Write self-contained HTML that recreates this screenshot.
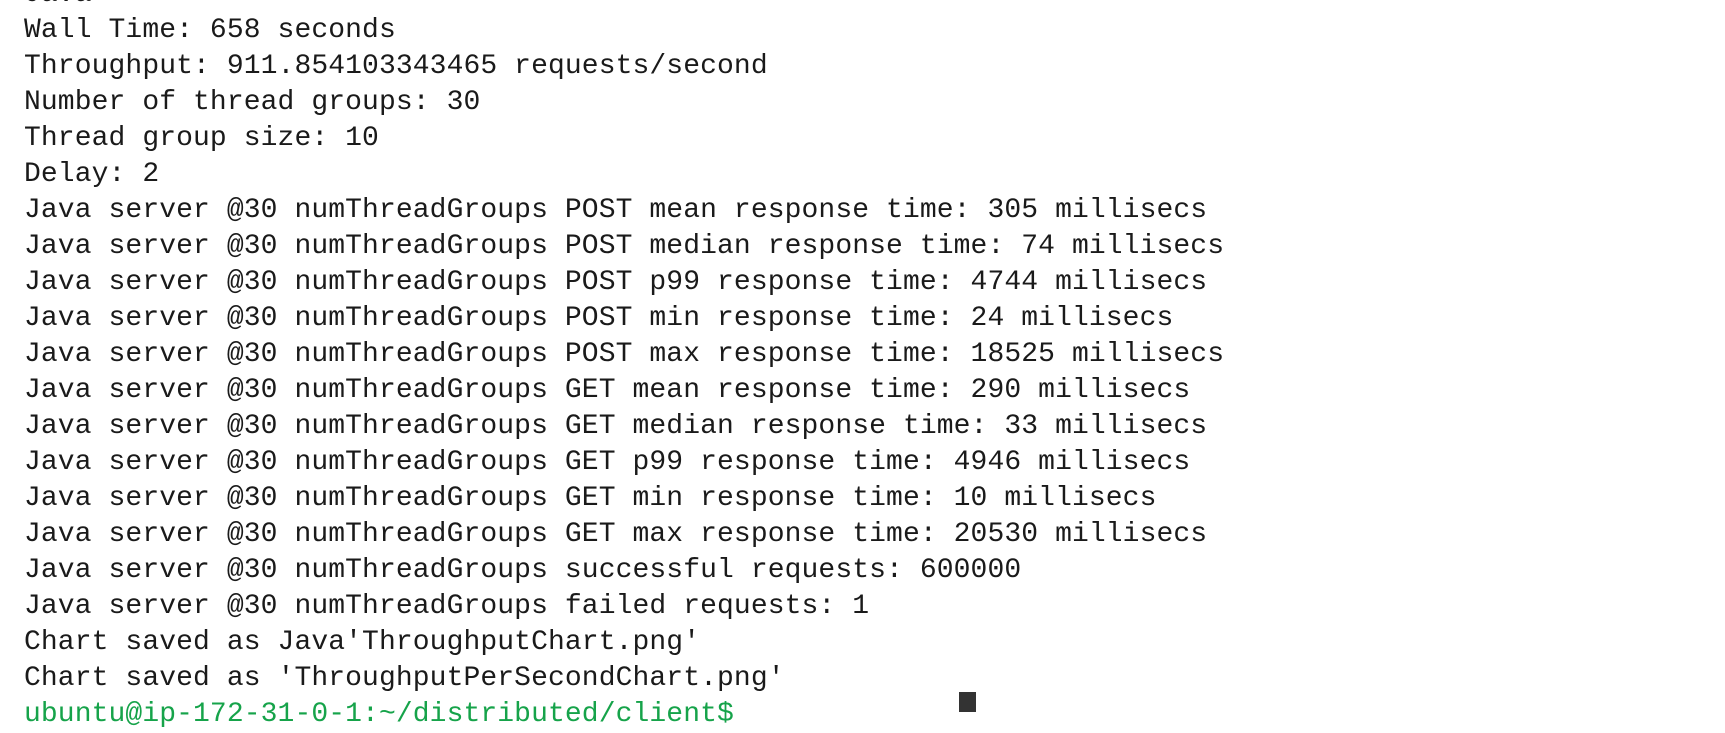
<!DOCTYPE html>
<html><head><style>
html,body{margin:0;padding:0;background:#fff;width:1725px;height:701px;overflow:hidden}
pre{position:absolute;left:24px;top:-23px;margin:0;font-family:"Liberation Mono",monospace;font-size:28px;line-height:36px;color:#1a1a1a;letter-spacing:0.1px}
.g{color:#16a34a}
.cur{position:absolute;left:959px;top:692px;width:17px;height:20px;background:#333}
</style></head><body>
<pre>Java
Wall Time: 658 seconds
Throughput: 911.854103343465 requests/second
Number of thread groups: 30
Thread group size: 10
Delay: 2
Java server @30 numThreadGroups POST mean response time: 305 millisecs
Java server @30 numThreadGroups POST median response time: 74 millisecs
Java server @30 numThreadGroups POST p99 response time: 4744 millisecs
Java server @30 numThreadGroups POST min response time: 24 millisecs
Java server @30 numThreadGroups POST max response time: 18525 millisecs
Java server @30 numThreadGroups GET mean response time: 290 millisecs
Java server @30 numThreadGroups GET median response time: 33 millisecs
Java server @30 numThreadGroups GET p99 response time: 4946 millisecs
Java server @30 numThreadGroups GET min response time: 10 millisecs
Java server @30 numThreadGroups GET max response time: 20530 millisecs
Java server @30 numThreadGroups successful requests: 600000
Java server @30 numThreadGroups failed requests: 1
Chart saved as Java'ThroughputChart.png'
Chart saved as 'ThroughputPerSecondChart.png'
<span class="g">ubuntu@ip-172-31-0-1:~/distributed/client$</span></pre>
<div class="cur"></div>
</body></html>
